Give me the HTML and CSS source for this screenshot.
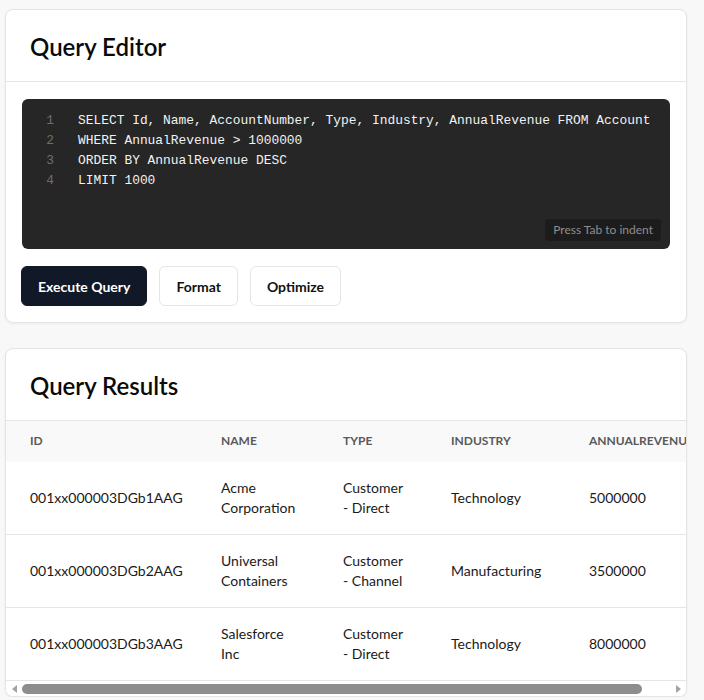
FILE: index.html
```html
<!DOCTYPE html>
<html lang="en">
<head>
<meta charset="utf-8">
<title>Query Editor</title>
<link rel="stylesheet" href="styles.css">
</head>
<body>
<div class="page">
  <section class="card">
    <header class="card-header"><h2 class="card-title">Query Editor</h2></header>
    <div class="card-body">
      <div class="editor">
        <div class="gutter">
          <div>1</div><div>2</div><div>3</div><div>4</div>
        </div>
        <pre class="code">SELECT Id, Name, AccountNumber, Type, Industry, AnnualRevenue FROM Account
WHERE AnnualRevenue &gt; 1000000
ORDER BY AnnualRevenue DESC
LIMIT 1000</pre>
        <span class="hint">Press Tab to indent</span>
      </div>
      <div class="actions">
        <button class="btn btn-primary">Execute Query</button>
        <button class="btn">Format</button>
        <button class="btn">Optimize</button>
      </div>
    </div>
  </section>

  <section class="card">
    <header class="card-header"><h2 class="card-title">Query Results</h2></header>
    <div class="table-wrap">
      <table class="results">
        <colgroup>
          <col class="c-id"><col class="c-name"><col class="c-type"><col class="c-ind"><col class="c-rev">
        </colgroup>
        <thead>
          <tr><th>Id</th><th>Name</th><th>Type</th><th>Industry</th><th>AnnualRevenue</th></tr>
        </thead>
        <tbody>
          <tr><td>001xx000003DGb1AAG</td><td>Acme Corporation</td><td>Customer - Direct</td><td>Technology</td><td>5000000</td></tr>
          <tr><td>001xx000003DGb2AAG</td><td>Universal Containers</td><td>Customer - Channel</td><td>Manufacturing</td><td>3500000</td></tr>
          <tr><td>001xx000003DGb3AAG</td><td>Salesforce Inc</td><td>Customer - Direct</td><td>Technology</td><td>8000000</td></tr>
        </tbody>
      </table>
    </div>
    <div class="hscroll" aria-hidden="true">
      <span class="arrow arrow-left"></span>
      <div class="track"><div class="thumb"></div></div>
      <span class="arrow arrow-right"></span>
    </div>
  </section>
</div>
</body>
</html>
```
FILE: styles.css
```css
* { box-sizing: border-box; }
html, body { margin: 0; padding: 0; }
body {
  background: #f8f8f8;
  font-family: Lato, "Open Sans", sans-serif;
  color: #111;
}
.page {
  width: 687px;
  padding: 9px 0 0 5px;
  display: flex;
  flex-direction: column;
  gap: 25px;
}
.card {
  background: #fff;
  border: 1px solid #e4e4e4;
  border-radius: 8px;
  box-shadow: 0 1px 3px rgba(0,0,0,0.05);
  overflow: hidden;
}
.card-header {
  padding: 21px 24px 19px;
  border-bottom: 1px solid #e5e5e5;
}
.card-title {
  margin: 0;
  font-size: 24px;
  line-height: 31px;
  font-weight: 600;
  color: #0a0a0a;
}
.card-body {
  padding: 17px 16px 16px;
}
.editor {
  position: relative;
  display: flex;
  background: #262626;
  border-radius: 6px;
  height: 150px;
  padding: 12px 0 0 0;
  font-family: "Liberation Mono", "DejaVu Sans Mono", monospace;
  font-size: 12.9px;
  line-height: 20px;
}
.gutter {
  width: 32px;
  text-align: right;
  color: #6e6e6e;
  margin-right: 24px;
}
.code {
  margin: 0;
  font: inherit;
  color: #f2f2f2;
  white-space: pre;
}
.hint {
  position: absolute;
  right: 9px;
  bottom: 8px;
  background: #1c1c1c;
  color: #8e8e8e;
  font-family: Lato, "Open Sans", sans-serif;
  font-size: 12px;
  line-height: 14px;
  padding: 4px 8px;
  border-radius: 4px;
}
.actions {
  display: flex;
  gap: 12px;
  margin-top: 17px;
  margin-left: -1px;
}
.btn {
  height: 40px;
  padding: 0 16px;
  border: 1px solid #e5e5e5;
  border-radius: 6px;
  background: #fff;
  color: #111;
  font-family: Lato, "Open Sans", sans-serif;
  font-size: 14px;
  font-weight: 700;
}
.btn-primary {
  background: #111827;
  border-color: #111827;
  color: #fff;
}
.table-wrap {
  overflow: hidden;
}
.results {
  border-collapse: collapse;
  table-layout: fixed;
  width: 724px;
}
.c-id { width: 191px; }
.c-name { width: 122px; }
.c-type { width: 108px; }
.c-ind { width: 138px; }
.c-rev { width: 165px; }
.results th {
  background: #f9f9f9;
  text-align: left;
  text-transform: uppercase;
  font-size: 12px;
  font-weight: 700;
  color: #5a5a5a;
  padding: 12px 24px 13px;
  line-height: 16px;
  white-space: nowrap;
  overflow: hidden;
}
.results td {
  padding: 16px 24px;
  font-size: 14px;
  line-height: 20px;
  color: #1a1a1a;
  border-bottom: 1px solid #e5e5e5;
  vertical-align: middle;
}
.hscroll {
  display: flex;
  align-items: center;
  height: 15px;
  background: #fff;
}
.arrow {
  width: 16px;
  display: flex;
  justify-content: center;
}
.arrow-left::before {
  content: "";
  border-top: 4px solid transparent;
  border-bottom: 4px solid transparent;
  border-right: 5px solid #a3a3a3;
}
.arrow-right::before {
  content: "";
  border-top: 4px solid transparent;
  border-bottom: 4px solid transparent;
  border-left: 5px solid #a3a3a3;
}
.track {
  flex: 1;
  height: 15px;
  display: flex;
  align-items: center;
}
.thumb {
  width: 620px;
  height: 10px;
  border-radius: 5px;
  background: #8d8d8d;
}
```
